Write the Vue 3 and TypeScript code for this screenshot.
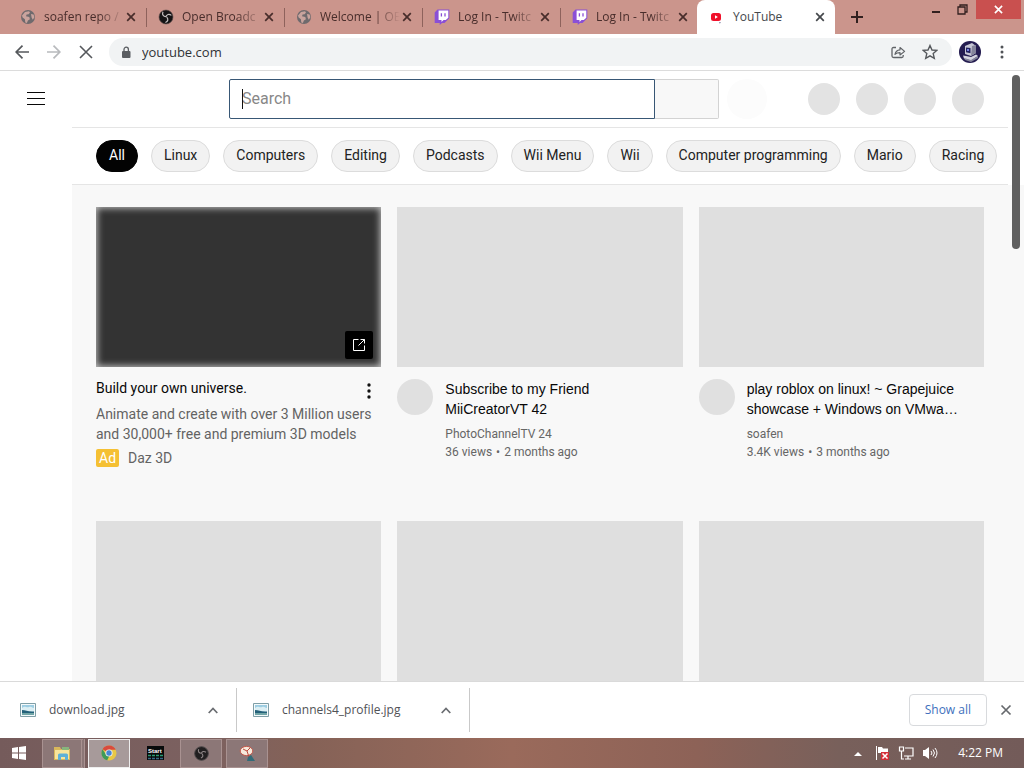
<script setup lang="ts">
interface Tab {
  title: string
  icon: 'globe' | 'obs' | 'twitch' | 'youtube'
  active?: boolean
}

interface Video {
  title: string
  channel: string
  views: string
  age: string
}

const tabs: Tab[] = [
  { title: 'soafen repo /', icon: 'globe' },
  { title: 'Open Broadc', icon: 'obs' },
  { title: 'Welcome | OE', icon: 'globe' },
  { title: 'Log In - Twitc', icon: 'twitch' },
  { title: 'Log In - Twitc', icon: 'twitch' },
  { title: 'YouTube', icon: 'youtube', active: true },
]

const chips = ['All', 'Linux', 'Computers', 'Editing', 'Podcasts', 'Wii Menu', 'Wii', 'Computer programming', 'Mario', 'Racing']

const videos: Video[] = [
  { title: 'Subscribe to my Friend MiiCreatorVT 42', channel: 'PhotoChannelTV 24', views: '36 views', age: '2 months ago' },
  { title: 'play roblox on linux! ~ Grapejuice showcase + Windows on VMwa…', channel: 'soafen', views: '3.4K views', age: '3 months ago' },
]

const downloads = ['download.jpg', 'channels4_profile.jpg']
</script>

<template>
  <div class="screen">
    <header class="tabstrip">
      <div class="tabs">
        <div v-for="(tab, i) in tabs" :key="i" class="tab" :class="{ active: tab.active }">
          <svg v-if="tab.icon === 'globe'" class="favicon" viewBox="0 0 16 16">
            <circle cx="8" cy="8" r="7" fill="#6f6a6d" />
            <path d="M2 6.5 5 3l4-.8 1 1.4-1.4 1.7-2 .3-.6 1.6 3.3.8.6 2.2-2 1.2-1 2.5-1.6-.4-.4-3.2L2.6 8.6zM11 5l2.600.6.8 2.600-1.600 2.600-1.200-2.200z" fill="#c9a39d" />
          </svg>
          <svg v-else-if="tab.icon === 'obs'" class="favicon" viewBox="0 0 16 16">
            <circle cx="8" cy="8" r="7" fill="#151315" stroke="#5d4b4a" stroke-width=".6" />
            <g fill="none" stroke="#c5bfc0" stroke-width="1.2">
              <path d="M5 2.800c-1.200 2.800.3 4.700 3 4.900" />
              <path d="M13.400 6.400C11 4.500 8.700 5.500 7.800 8" />
              <path d="M7.400 13.500c2.700-.900 3.200-3.300 1.300-5.400" />
            </g>
          </svg>
          <svg v-else-if="tab.icon === 'twitch'" class="favicon" viewBox="0 0 16 16">
            <path d="M3.500.5h11.800v8.700L10.500 14H8l-2.300 2V14H.7V3.400z" fill="#8a4fd6" />
            <path d="M4.600 1.500h9.700v7.200l-2.500 2.400H9.500l-2 1.900v-1.900H4.600z" fill="#fff" />
            <path d="M7.400 4.200v3.200M11 4.200v3.200" stroke="#8a4fd6" stroke-width="1.3" />
          </svg>
          <svg v-else class="favicon" viewBox="0 0 16 16">
            <rect x="2" y="4" width="10" height="8" rx="2.500" fill="#f0102a" />
            <path d="M6 6.300v3.400L8.900 8z" fill="#fff" />
            <path d="m10 13 2 .3-1.200 1.400z" fill="#7f7fa0" />
          </svg>
          <span class="tab-title">{{ tab.title }}</span>
          <button class="plain tab-close" aria-label="Close tab">
            <svg viewBox="0 0 10 10" width="10" height="10"><path d="m1.200 1.200 7.600 7.600m0-7.600L1.200 8.800" stroke="currentColor" stroke-width="1.700" /></svg>
          </button>
        </div>
      </div>
      <button class="plain new-tab" aria-label="New tab">
        <svg viewBox="0 0 12 12" width="12" height="12"><path d="M6 0v12M0 6h12" stroke="#32201f" stroke-width="2" /></svg>
      </button>
      <div class="window-buttons">
        <button class="plain" aria-label="Minimize"><svg viewBox="0 0 10 12" width="10" height="12"><path d="M1 8h8" stroke="#32201f" stroke-width="2" /></svg></button>
        <button class="plain" aria-label="Restore"><svg viewBox="0 0 11 11" width="11" height="11"><path d="M1 3h7v7H1zM3 3V1h7v7H8" fill="none" stroke="#32201f" stroke-width="1.300" /></svg></button>
        <button class="plain window-close" aria-label="Close window"><svg viewBox="0 0 10 10" width="9" height="9"><path d="m1 1 8 8m0-8L1 9" stroke="#fff" stroke-width="1.800" /></svg></button>
      </div>
    </header>

    <nav class="toolbar">
      <button class="plain nav-button" aria-label="Back"><svg viewBox="0 0 14 14" width="14" height="14"><path d="M14 7H1M7.500.7 1.200 7l6.300 6.300" fill="none" stroke="#55585c" stroke-width="1.700" /></svg></button>
      <button class="plain nav-button" aria-label="Forward"><svg viewBox="0 0 14 14" width="14" height="14"><path d="M0 7h13M6.500.7 12.800 7l-6.300 6.300" fill="none" stroke="#b8babd" stroke-width="1.700" /></svg></button>
      <button class="plain nav-button" aria-label="Stop loading"><svg viewBox="0 0 14 14" width="14" height="14"><path d="m1 1 12 12m0-12L1 13" stroke="#55585c" stroke-width="1.600" /></svg></button>
      <div class="address">
        <svg viewBox="0 0 10 13" width="10" height="13"><rect x="1" y="5" width="8.500" height="7" rx="1" fill="#5b5e62" /><path d="M3 5.500V3.400a2.200 2.200 0 0 1 4.400 0v2.100" fill="none" stroke="#5b5e62" stroke-width="1.300" /></svg>
        <input class="url" aria-label="Address" value="youtube.com" />
        <button class="plain" aria-label="Share"><svg viewBox="0 0 15 14" width="15" height="14"><path d="M5 2.500H2.600Q1 2.500 1 4v7q0 1.500 1.600 1.500h8.100q1.500 0 1.500-1.500v-1" fill="none" stroke="#606367" stroke-width="1.300" /><path d="M4 9.300c.5-3 2.300-4.300 5-4.500V2.500l4.600 3.900L9 10V7.700C7 7.700 5.400 8.100 4 9.300z" fill="none" stroke="#606367" stroke-width="1.200" stroke-linejoin="round" /></svg></button>
        <button class="plain" aria-label="Bookmark"><svg viewBox="0 0 16 16" width="16" height="16"><path d="m8 1.500 2 4.500 4.800.4-3.600 3.200 1.100 4.800L8 11.900l-4.300 2.500 1.100-4.800-3.600-3.200L6 6z" fill="none" stroke="#55585c" stroke-width="1.400" /></svg></button>
      </div>
      <button class="plain profile" aria-label="Profile">
        <svg viewBox="0 0 22 22" width="22" height="22">
          <circle cx="11" cy="11" r="11" fill="#241c50" />
          <path d="m6 5 7-3 4 3v7l-5 3-6-2z" fill="#c6c6d4" /><path d="m13 5 4-1v8l-5 3z" fill="#85859b" />
          <path d="m7 6.500 4.500.4v5.300L7 11.200z" fill="#24235f" /><path d="M8 8h2v2H8z" fill="#7680e0" />
          <path d="m4 14.500 3 .5 5 1 5-2.500 2 1.500-7 4.500-7-2z" fill="#d5d5df" /><path d="m5 17 7 2 7-4v2l-7 4-6-2z" fill="#85859b" />
        </svg>
      </button>
      <button class="plain" aria-label="Browser menu"><svg viewBox="0 0 4 14" width="4" height="14" fill="#505357"><circle cx="2" cy="2" r="1.500" /><circle cx="2" cy="7" r="1.500" /><circle cx="2" cy="12" r="1.500" /></svg></button>
    </nav>

    <main class="page">
      <div class="masthead">
        <button class="plain guide" aria-label="Guide"><svg viewBox="0 0 18 14" width="18" height="14"><path d="M0 .5h18M0 6.500h18M0 12.500h18" stroke="#080808" /></svg></button>
        <form class="search" @submit.prevent>
          <div class="search-field">
            <input type="text" placeholder="Search" aria-label="Search" />
            <span class="caret"></span>
          </div>
          <button class="search-button" aria-label="Search videos"></button>
        </form>
        <span class="mic"></span>
        <div class="account"><span v-for="n in 4" :key="n"></span></div>
      </div>

      <div class="body">
        <div class="chips">
          <button v-for="(chip, i) in chips" :key="chip" class="chip" :class="{ selected: i === 0 }">{{ chip }}</button>
        </div>
        <div class="feed">
          <article class="card">
            <div class="thumb ad-thumb">
              <a href="#" class="external" aria-label="Open advertiser site"><svg viewBox="0 0 14 14" width="14" height="14" fill="none" stroke="#fff"><path d="M6.500 1.500h-5v11h11v-5M8.500 1.500h4v4M12.500 1.500l-6 6" /></svg></a>
            </div>
            <div class="ad-details">
              <div class="ad-head">
                <h3>Build your own universe.</h3>
                <button class="plain" aria-label="More actions"><svg viewBox="0 0 4 16" width="4" height="16" fill="#111"><circle cx="2" cy="2" r="1.700" /><circle cx="2" cy="8" r="1.700" /><circle cx="2" cy="14" r="1.700" /></svg></button>
              </div>
              <p class="ad-text">Animate and create with over 3 Million users and 30,000+ free and premium 3D models</p>
              <p class="ad-source"><span class="badge">Ad</span>Daz 3D</p>
            </div>
          </article>
          <article v-for="video in videos" :key="video.title" class="card">
            <div class="thumb"></div>
            <div class="details">
              <span class="avatar"></span>
              <div class="video-text">
                <h3>{{ video.title }}</h3>
                <p>{{ video.channel }}</p>
                <p>{{ video.views }}<span class="dot">•</span>{{ video.age }}</p>
              </div>
            </div>
          </article>
          <article v-for="n in 3" :key="n" class="card"><div class="thumb"></div></article>
        </div>
      </div>
      <div class="scroll-thumb"></div>
    </main>

    <section class="shelf">
      <div v-for="file in downloads" :key="file" class="download">
        <svg viewBox="0 0 16 14" width="16" height="14"><path d="M.5.5h15v13H.5z" fill="#f5fafb" stroke="#7f9fa7" /><path d="M2 2h12v6H2z" fill="#9dcde2" /><path d="M2 5c3-3 4 0 7-1s3 1 5 1v4H2z" fill="#dceff4" /><path d="M2 7c4 0 6 2 12 1.500V12H2z" fill="#24617a" /><path d="M2 10h12v2H2z" fill="#71a5a6" /></svg>
        <a href="#">{{ file }}</a>
        <button class="plain" :aria-label="'Options for ' + file"><svg viewBox="0 0 10 7" width="10" height="7"><path d="m.7 6 4.300-4.600L9.300 6" fill="none" stroke="#6a6d71" stroke-width="1.700" /></svg></button>
      </div>
      <button class="show-all">Show all</button>
      <button class="plain" aria-label="Close downloads"><svg viewBox="0 0 12 12" width="12" height="12"><path d="m1.500 1.500 9 9m0-9-9 9" stroke="#66696d" stroke-width="1.700" /></svg></button>
    </section>

    <footer class="taskbar">
      <button class="plain start" aria-label="Start"><svg viewBox="0 0 14 14" width="14" height="14"><path d="m0 2 6-.9v5.500H0zm7-1L14 0v6.600H7zM0 7.600h6V13l-6-.9zm7 0h7V14l-7-.9z" fill="#fff" /></svg></button>
      <button class="task stacked" aria-label="File Explorer">
        <svg viewBox="0 0 18 16" width="18" height="16"><path d="M1 2h6l1 2h9v11H1z" fill="#d8b75b" /><path d="M2 5h14v9H2z" fill="#f7e59c" /><path d="M9 2h7v3H9z" fill="#87b57c" /><path d="M5 15v-5q0-1.500 1.500-1.500h7Q15 8.500 15 10v5h-3v-3H8v3z" fill="#5eb1d8" /></svg>
      </button>
      <button class="task current" aria-label="Chrome">
        <svg viewBox="0 0 16 16" width="16" height="16"><circle cx="8" cy="8" r="7.500" fill="#e8c845" /><path d="M8 8 1.500 4.200A7.500 7.500 0 0 1 14.800 4.800H8z" fill="#d94a3e" /><path d="M1.500 4.200 5.200 9.700l3 1.600-2 4A7.500 7.500 0 0 1 1.500 4.200z" fill="#3f9a59" /><circle cx="8" cy="8" r="3.600" fill="#eee" /><circle cx="8" cy="8" r="2.700" fill="#4786d2" /></svg>
      </button>
      <button class="task bare" aria-label="Start screen">
        <svg viewBox="0 0 17 14" width="17" height="14"><path d="M0 0h17v14H0z" fill="#090b0b" /><text x="1" y="7" font-size="6" font-weight="700" font-family="Liberation Sans, sans-serif" fill="#fff">Start</text><path d="M1 9.500h3m1 0h3m1 0h3m1 0h3" stroke="#2b9a72" stroke-width="1.500" /><path d="M1 12.500h3m1 0h3m1 0h3m1 0h3" stroke="#396886" stroke-width="1.500" /></svg>
      </button>
      <button class="task" aria-label="OBS Studio">
        <svg viewBox="0 0 16 16" width="15" height="15"><circle cx="8" cy="8" r="7.300" fill="#211f20" stroke="#4b4647" /><g fill="none" stroke="#8d8586" stroke-width="1.200"><path d="M5 3.500c-1 2.500.3 4 3 4.300" /><path d="M12.800 6.700c-2.400-1.700-4.200-.8-5 1.300" /><path d="M7.400 12.800c2.400-.8 2.700-2.800 1-4.800" /></g></svg>
      </button>
      <button class="task" aria-label="Snipping Tool">
        <svg viewBox="0 0 17 17" width="17" height="17"><ellipse cx="7.500" cy="6" rx="6.300" ry="4.600" fill="#f6eadc" stroke="#c4574a" /><path d="m4 4 4 2 3-3M8 6l2 6" stroke="#bd4a3e" fill="none" /><path d="m8 16 1-4 3-2 4 6z" fill="#326b78" /></svg>
      </button>
      <div class="tray">
        <svg viewBox="0 0 8 5" width="8" height="5"><path d="m0 5 4-4 4 4z" fill="#fff" /></svg>
        <svg viewBox="0 0 16 16" width="16" height="16"><path d="M2.500 1v14" stroke="#fff" /><path d="M4 2h4l1 1.500h5V9H9L8 8H4z" fill="#fff" /><path d="M7 7h8v8H7z" fill="#d42e38" /><path d="m8.500 8.500 5 5m0-5-5 5" stroke="#fff" stroke-width="1.500" /></svg>
        <svg viewBox="0 0 16 16" width="16" height="16" fill="none" stroke="#fff" stroke-width="1.200"><path d="M7 3h8v8H6M10 11v3M7 14h6M1.500 2h4v4h-4zM3.500 6v8H6" /></svg>
        <svg viewBox="0 0 16 16" width="16" height="16"><path d="M1 5h2l4-3v12l-4-3H1z" fill="#fff" /><path d="M9 6q2 2 0 4M11 4.500q3 3.500 0 7M13 3q4 5 0 10" fill="none" stroke="#fff" /></svg>
        <time>4:22 PM</time>
      </div>
    </footer>
  </div>
</template>

<style>
body { margin: 0; }
</style>

<style scoped>
* { box-sizing: border-box; }
.screen { display: flex; flex-direction: column; height: 100vh; overflow: hidden; background: #fff; font-family: "Open Sans", "Noto Sans", sans-serif; color: #333; }
svg { display: block; flex: none; }
h3, p { margin: 0; font-weight: 400; }
button { font-family: inherit; }
a { color: inherit; text-decoration: none; }
.plain { display: flex; align-items: center; justify-content: center; padding: 0; border: 0; background: none; color: inherit; flex: none; }

.tabstrip { display: flex; height: 34px; flex: none; background: #cb958c; color: #482d2b; }
.tabs { display: flex; padding-left: 8px; flex: none; }
.tab { display: flex; align-items: center; width: 138px; padding: 0 10px 0 12px; position: relative; }
.tab::after { content: ""; position: absolute; right: -1px; top: 8px; width: 1px; height: 19px; background: #8e625c; }
.tab:nth-last-child(2)::after, .tab.active::after { display: none; }
.tab.active { margin-left: -1px; background: #fff; border-radius: 8px 8px 0 0; color: #45484c; }
.favicon { width: 16px; height: 16px; }
.tab-title { flex: 1; min-width: 0; margin: 0 2px 0 8px; white-space: nowrap; font-size: 12px; line-height: 18px; -webkit-mask-image: linear-gradient(90deg, #000 68%, transparent); mask-image: linear-gradient(90deg, #000 68%, transparent); }
.active .tab-title { -webkit-mask-image: none; mask-image: none; }
.new-tab { width: 44px; }
.window-buttons { display: flex; align-items: flex-start; margin-left: auto; }
.window-buttons button { width: 26px; height: 19px; }
.window-buttons .window-close { width: 45px; margin-left: 1px; margin-right: 3px; background: #c9504f; }

.toolbar { display: flex; align-items: center; height: 37px; flex: none; padding: 0 20px 0 6px; border-bottom: 1px solid #dcdcdc; }
.nav-button { width: 32px; height: 28px; }
.address { flex: 1; display: flex; align-items: center; gap: 16px; height: 28px; margin-left: 7px; padding: 0 14px 0 12px; border-radius: 14px; background: #f1f3f4; }
.url { flex: 1; min-width: 0; margin-left: -5px; padding: 0; border: 0; outline: 0; background: none; font: 13px/20px "Open Sans", sans-serif; color: #303236; }
.profile { margin: 0 19px 0 7px; }

.page { flex: 1; min-height: 0; display: flex; flex-direction: column; position: relative; overflow: hidden; font-family: Roboto, sans-serif; }
.masthead { display: flex; align-items: center; height: 56px; flex: none; padding-right: 40px; }
.guide { width: 72px; height: 40px; margin-right: 157px; }
.search { display: flex; flex: 1; height: 40px; }
.search-field { position: relative; flex: 1; }
.search-field input { width: 100%; height: 40px; padding: 0 12px 2px; border: 1px solid #385775; border-radius: 2px 0 0 2px; outline: 0; font: 16px/24px Roboto, sans-serif; }
.search-field input::placeholder { color: #888; opacity: 1; }
.caret { position: absolute; left: 13px; top: 10px; width: 1px; height: 20px; background: #111; }
.search-button { width: 64px; padding: 0; border: 1px solid #d3d3d3; border-left: 0; border-radius: 0 2px 2px 0; background: #f8f8f8; }
.mic { width: 40px; height: 40px; margin-left: 8px; border-radius: 50%; background: #fcfcfc; }
.account { display: flex; gap: 16px; margin-left: 41px; }
.account span { width: 32px; height: 32px; border-radius: 50%; background: #e3e3e3; }

.body { flex: 1; min-height: 0; margin-left: 72px; background: #f8f8f8; }
.chips { display: flex; align-items: center; gap: 13px; height: 58px; margin-right: 16px; padding-left: 24px; background: #fff; border-top: 1px solid #e5e5e5; border-bottom: 1px solid #e5e5e5; box-shadow: 16px 0 0 #fff; }
.chip { height: 32px; flex: none; padding: 0 12px 2px; border: 1px solid #dcdcdc; border-radius: 16px; background: #f2f2f2; color: #222; font-size: 14px; line-height: 20px; white-space: nowrap; }
.chip.selected { background: #030303; border-color: #030303; color: #fff; }
.feed { display: grid; grid-template-columns: repeat(3, minmax(0, 1fr)); gap: 53px 16px; padding: 22px 40px 0 24px; }
.thumb { aspect-ratio: 57 / 32; background: #dfdfdf; }
.ad-thumb { position: relative; background: #333; box-shadow: inset 0 0 7px 1px #c8c8c8; }
.external { position: absolute; right: 8px; bottom: 8px; display: grid; place-items: center; width: 28px; height: 28px; border-radius: 2px; background: #000; }
h3 { font-size: 14px; line-height: 20px; color: #080808; }
.ad-details { padding-top: 11px; color: #636363; font-size: 14px; line-height: 20px; }
.ad-head { display: flex; justify-content: space-between; padding-right: 10px; }
.ad-head button { height: 26px; margin-bottom: -4px; }
.ad-text { padding-top: 4px; }
.ad-source { display: flex; align-items: center; gap: 9px; padding-top: 4px; }
.badge { padding: 0 3px; border-radius: 2px; background: #f5c033; color: #fff; line-height: 18px; }
.details { display: flex; gap: 12px; padding-top: 12px; }
.avatar { width: 36px; height: 36px; flex: none; border-radius: 50%; background: #e0e0e0; }
.video-text { min-width: 0; padding-right: 24px; color: #666; font-size: 12px; line-height: 18px; }
.video-text h3 { margin-bottom: 6px; font-family: "Liberation Sans", Arial, sans-serif; }
.dot { margin: 0 4px; }
.scroll-thumb { position: absolute; right: 4px; top: 4px; width: 8px; height: 174px; border-radius: 4px; background: #606060; }

.shelf { display: flex; align-items: center; height: 57px; flex: none; padding: 0 12px 0 4px; border-top: 1px solid #dadada; background: #fff; }
.download { display: flex; align-items: center; gap: 13px; width: 233px; height: 44px; padding: 0 18px 0 16px; border-right: 1px solid #c9c9c9; font-size: 12px; line-height: 20px; color: #505256; }
.download a { flex: 1; }
.show-all { height: 32px; margin: 0 13px 0 auto; padding: 0 15px; border: 1px solid #d8dadd; border-radius: 4px; background: #fff; color: #3e70bd; font-size: 12px; font-weight: 500; line-height: 18px; }

.taskbar { display: flex; align-items: center; height: 30px; flex: none; background: linear-gradient(90deg, #755b5b 0, #7c6160 20%, #856257 30%, #9a6a5b 50%, #8d6257 68%, #78605b 82%, #735b59 100%); }
.start { width: 38px; height: 30px; }
.task { display: flex; align-items: center; justify-content: center; width: 42px; height: 29px; margin-left: 4px; padding: 0; border: 1px solid #a99291; background: #8c7777; }
.task.stacked { width: 43px; border-right: 4px double #a99291; }
.task.current { margin-left: 3px; border: 1px solid #eee; background: #a79a9a; }
.task.bare { border-color: transparent; background: none; }
.tray { display: flex; align-items: center; gap: 8px; margin-left: auto; padding-right: 21px; color: #fff; font-size: 12px; line-height: 18px; }
.tray > svg:first-child { margin-right: 4px; }
time { margin-left: 12px; white-space: nowrap; }
</style>
